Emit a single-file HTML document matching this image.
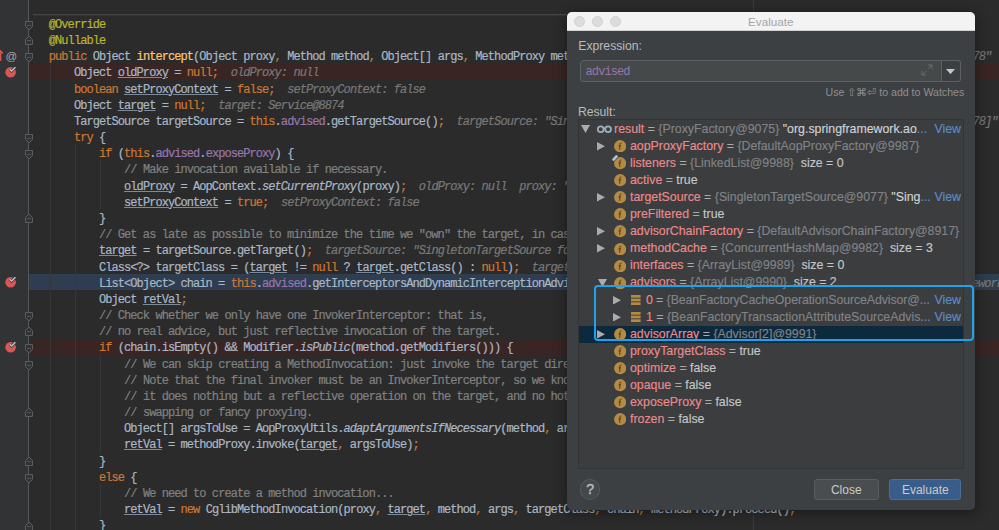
<!DOCTYPE html>
<html><head><meta charset="utf-8"><style>
*{margin:0;padding:0;box-sizing:border-box}
html,body{width:999px;height:530px;overflow:hidden;background:#2b2b2b}
body{position:relative;font-family:"Liberation Sans",sans-serif}
.gut{position:absolute;left:0;top:0;width:28.5px;height:530px;background:#313335}
.foldline{position:absolute;left:28px;top:0;width:1px;height:530px;background:#555759}
.sep{position:absolute;left:33px;top:14px;width:940px;height:2px;border-top:1px solid #454545;background:#353535}
.hl{position:absolute;left:29px;width:970px;height:16.18px}
.gd{position:absolute;width:1px;background:#373737}
.ln{position:absolute;left:48.8px;height:16.18px;line-height:16.18px;white-space:pre;font-family:"Liberation Mono",monospace;font-size:12px;letter-spacing:-0.93px;color:#a9b7c6;-webkit-text-stroke:0.2px currentColor}
.k{color:#cc7832}.a{color:#bbb529}.fn{color:#ffc66d}.f{color:#9876aa}.c{color:#808080}.i{font-style:italic}
.u{text-decoration:underline;text-decoration-color:#7d8a99;text-decoration-thickness:1px;text-underline-offset:1px}
.h{font-style:italic;color:#787878}
.fold{position:absolute;left:24.5px}
.bp{position:absolute;left:5px}
.rgt{position:absolute;left:48.8px}
.vguide{position:absolute;left:753px;top:0;width:1px;height:530px;background:#3b3b3b}

.ab{position:absolute}
.dlg{position:absolute;left:567px;top:11.5px;width:407.5px;height:498.2px;background:#3d4042;border-radius:5px;box-shadow:0 2px 14px rgba(0,0,0,0.45);overflow:hidden}
.tbar{position:absolute;left:0;top:0;width:100%;height:19.3px;background:#f3f3f3;border-bottom:1px solid #d2d2d2}
.tl{position:absolute;top:4.4px;width:11px;height:11px;border-radius:50%;background:#dcdcdc;border:0.5px solid #d0d0d0}
.ttl{position:absolute;left:0;width:100%;text-align:center;top:0;line-height:19px;font-size:11.7px;color:#a6a6a6;padding-left:0}
.lbl{position:absolute;font-size:12.2px;line-height:16px;color:#bbbbbb}
.inp{left:580.4px;top:60.4px;width:380.7px;height:21.5px;background:#45494a;border:1px solid #5d6062;border-radius:3px}
.drop{left:941px;top:60.4px;width:20.1px;height:21.5px;background:#3c3f41;border:1px solid #5d6062;border-radius:0 3px 3px 0}
.hint{left:825.5px;top:86px;font-size:10.6px;line-height:13px;color:#8d8f91;white-space:pre}
.panel{left:577.6px;top:118.6px;width:386.6px;height:350.4px;background:#3b3d3f;border:1px solid #323435}
.tr{position:absolute;height:17px;line-height:17px;font-size:12.35px;white-space:pre;overflow:hidden;-webkit-text-stroke:0.15px currentColor}
.nm{color:#ea8a8c}.eq{color:#a9abad}.ty{color:#808386}.val{color:#c4c6c8}.str{color:#d0d2d4}.lnk{color:#5b8cc8}
.bluebox{left:594.2px;top:284.9px;width:380.3px;height:56px;border:2.1px solid #1fa3ea;border-radius:4px}
.help{left:579.8px;top:479.2px;width:20.6px;height:20.5px;border-radius:50%;background:#45484a;border:1px solid #56595b;color:#b9bbbd;font-size:14px;text-align:center;line-height:19px;-webkit-text-stroke:0.4px currentColor}
.btn{top:479.3px;height:21px;border:1px solid;border-radius:3px;color:#c8cacc;font-size:12px;line-height:20.5px;text-align:center}
</style></head>
<body>

<div class="gut"></div>
<div class="vguide"></div>
<div class="sep"></div>
<div class="hl" style="top:63.64px;background:#3a2525"></div>
<div class="hl" style="top:338.70px;background:#3a2525"></div>
<div class="hl" style="top:273.98px;background:#2e3d50"></div>
<div class="gd" style="left:49.60px;top:63.64px;height:469.22px"></div>
<div class="gd" style="left:74.68px;top:144.54px;height:388.32px"></div>
<div class="gd" style="left:99.76px;top:160.72px;height:48.54px"></div>
<div class="gd" style="left:99.76px;top:354.88px;height:97.08px"></div>
<div class="gd" style="left:99.76px;top:484.32px;height:32.36px"></div>
<div class="ln" style="top:16.80px"><span class="a">@Override</span></div>
<div class="ln" style="top:32.98px"><span class="a">@Nullable</span></div>
<div class="ln" style="top:49.16px"><span class="k">public</span> Object <span class="fn">intercept</span>(Object proxy<span class="k">,</span> Method method<span class="k">,</span> Object[] args<span class="k">,</span> MethodProxy methodProxy) <span class="k">throws</span> Throwable {</div>
<div class="ln" style="top:65.34px">    Object <span class="u">oldProxy</span> = <span class="k">null;</span>  <span class="h">oldProxy: null</span></div>
<div class="ln" style="top:81.52px">    <span class="k">boolean</span> <span class="u">setProxyContext</span> = <span class="k">false;</span>  <span class="h">setProxyContext: false</span></div>
<div class="ln" style="top:97.70px">    Object <span class="u">target</span> = <span class="k">null;</span>  <span class="h">target: Service@8874</span></div>
<div class="ln" style="top:113.88px">    TargetSource targetSource = <span class="k">this</span>.<span class="f">advised</span>.getTargetSource()<span class="k">;</span>  <span class="h">targetSource: "SingletonTargetSource for target object [com.example.Servi</span></div>
<div class="ln" style="top:130.06px">    <span class="k">try</span> {</div>
<div class="ln" style="top:146.24px">        <span class="k">if</span> (<span class="k">this</span>.<span class="f">advised</span>.<span class="f">exposeProxy</span>) {</div>
<div class="ln" style="top:162.42px">            <span class="c">// Make invocation available if necessary.</span></div>
<div class="ln" style="top:178.60px">            <span class="u">oldProxy</span> = AopContext.<span class="i">setCurrentProxy</span>(proxy)<span class="k">;</span>  <span class="h">oldProxy: null  proxy: "com.example.Service@5d0a1b78"</span></div>
<div class="ln" style="top:194.78px">            <span class="u">setProxyContext</span> = <span class="k">true;</span>  <span class="h">setProxyContext: false</span></div>
<div class="ln" style="top:210.96px">        }</div>
<div class="ln" style="top:227.14px">        <span class="c">// Get as late as possible to minimize the time we "own" the target, in case the target comes from a pool.</span></div>
<div class="ln" style="top:243.32px">        <span class="u">target</span> = targetSource.getTarget()<span class="k">;</span>  <span class="h">targetSource: "SingletonTargetSource for target object [com.example]"</span></div>
<div class="ln" style="top:259.50px">        Class&lt;?&gt; targetClass = (<span class="u">target</span> != <span class="k">null</span> ? <span class="u">target</span>.getClass() : <span class="k">null</span>)<span class="k">;</span>  <span class="h">targetClass: "class com.example.Service"</span></div>
<div class="ln" style="top:275.68px">        List&lt;Object&gt; chain = <span class="k">this</span>.<span class="f">advised</span>.getInterceptorsAndDynamicInterceptionAdvice(method, targetClass)<span class="k">;</span>  <span class="h">chain: size = 1  method: "public</span></div>
<div class="ln" style="top:291.86px">        Object <span class="u">retVal</span><span class="k">;</span></div>
<div class="ln" style="top:308.04px">        <span class="c">// Check whether we only have one InvokerInterceptor: that is,</span></div>
<div class="ln" style="top:324.22px">        <span class="c">// no real advice, but just reflective invocation of the target.</span></div>
<div class="ln" style="top:340.40px">        <span class="k">if</span> (chain.isEmpty() &amp;&amp; Modifier.<span class="i">isPublic</span>(method.getModifiers())) {</div>
<div class="ln" style="top:356.58px">            <span class="c">// We can skip creating a MethodInvocation: just invoke the target directly.</span></div>
<div class="ln" style="top:372.76px">            <span class="c">// Note that the final invoker must be an InvokerInterceptor, so we know</span></div>
<div class="ln" style="top:388.94px">            <span class="c">// it does nothing but a reflective operation on the target, and no hot</span></div>
<div class="ln" style="top:405.12px">            <span class="c">// swapping or fancy proxying.</span></div>
<div class="ln" style="top:421.30px">            Object[] argsToUse = AopProxyUtils.<span class="i">adaptArgumentsIfNecessary</span>(method<span class="k">,</span> args)<span class="k">;</span></div>
<div class="ln" style="top:437.48px">            <span class="u">retVal</span> = methodProxy.invoke(<span class="u">target</span><span class="k">,</span> argsToUse)<span class="k">;</span></div>
<div class="ln" style="top:453.66px">        }</div>
<div class="ln" style="top:469.84px">        <span class="k">else</span> {</div>
<div class="ln" style="top:486.02px">            <span class="c">// We need to create a method invocation...</span></div>
<div class="ln" style="top:502.20px">            <span class="u">retVal</span> = <span class="k">new</span> CglibMethodInvocation(proxy<span class="k">,</span> <span class="u">target</span><span class="k">,</span> method<span class="k">,</span> args<span class="k">,</span> targetClass<span class="k">,</span> chain<span class="k">,</span> methodProxy).proceed()<span class="k">;</span></div>
<div class="ln" style="top:518.38px">        }</div>
<svg class="bp" style="top:65.73px" width="14" height="12" viewBox="0 0 14 12"><circle cx="5.6" cy="6.2" r="5.3" fill="#d95757"/><path d="M4.8,3.4 L6.6,5.0 L10.4,1.3" fill="none" stroke="#313335" stroke-width="2.8"/><path d="M4.8,3.4 L6.6,5.0 L10.4,1.3" fill="none" stroke="#bfc2c4" stroke-width="1.6"/></svg>
<svg class="bp" style="top:276.07px" width="14" height="12" viewBox="0 0 14 12"><circle cx="5.6" cy="6.2" r="5.3" fill="#d95757"/><path d="M4.8,3.4 L6.6,5.0 L10.4,1.3" fill="none" stroke="#313335" stroke-width="2.8"/><path d="M4.8,3.4 L6.6,5.0 L10.4,1.3" fill="none" stroke="#bfc2c4" stroke-width="1.6"/></svg>
<svg class="bp" style="top:340.79px" width="14" height="12" viewBox="0 0 14 12"><circle cx="5.6" cy="6.2" r="5.3" fill="#d95757"/><path d="M4.8,3.4 L6.6,5.0 L10.4,1.3" fill="none" stroke="#313335" stroke-width="2.8"/><path d="M4.8,3.4 L6.6,5.0 L10.4,1.3" fill="none" stroke="#bfc2c4" stroke-width="1.6"/></svg>
<div class="foldline"></div>
<svg class="fold" style="top:20.79px" width="8" height="9" viewBox="0 0 8 9"><path d="M0.5,0.5 H7.5 V5.5 L4,9 L0.5,5.5 Z" fill="#313335" stroke="#5a5c5e" stroke-width="1"/><path d="M2,4.5 H6" stroke="#535557" stroke-width="1"/></svg><svg class="fold" style="top:36.17px" width="8" height="9" viewBox="0 0 8 9"><path d="M0.5,8.5 H7.5 V3.5 L4,0 L0.5,3.5 Z" fill="#313335" stroke="#5a5c5e" stroke-width="1"/><path d="M2,4.5 H6" stroke="#535557" stroke-width="1"/></svg><svg class="fold" style="top:53.15px" width="8" height="9" viewBox="0 0 8 9"><path d="M0.5,0.5 H7.5 V5.5 L4,9 L0.5,5.5 Z" fill="#313335" stroke="#5a5c5e" stroke-width="1"/><path d="M2,4.5 H6" stroke="#535557" stroke-width="1"/></svg><svg class="fold" style="top:134.05px" width="8" height="9" viewBox="0 0 8 9"><path d="M0.5,0.5 H7.5 V5.5 L4,9 L0.5,5.5 Z" fill="#313335" stroke="#5a5c5e" stroke-width="1"/><path d="M2,4.5 H6" stroke="#535557" stroke-width="1"/></svg><svg class="fold" style="top:150.23px" width="8" height="9" viewBox="0 0 8 9"><path d="M0.5,0.5 H7.5 V5.5 L4,9 L0.5,5.5 Z" fill="#313335" stroke="#5a5c5e" stroke-width="1"/><path d="M2,4.5 H6" stroke="#535557" stroke-width="1"/></svg><svg class="fold" style="top:214.15px" width="8" height="9" viewBox="0 0 8 9"><path d="M0.5,8.5 H7.5 V3.5 L4,0 L0.5,3.5 Z" fill="#313335" stroke="#5a5c5e" stroke-width="1"/><path d="M2,4.5 H6" stroke="#535557" stroke-width="1"/></svg><svg class="fold" style="top:312.03px" width="8" height="9" viewBox="0 0 8 9"><path d="M0.5,0.5 H7.5 V5.5 L4,9 L0.5,5.5 Z" fill="#313335" stroke="#5a5c5e" stroke-width="1"/><path d="M2,4.5 H6" stroke="#535557" stroke-width="1"/></svg><svg class="fold" style="top:327.41px" width="8" height="9" viewBox="0 0 8 9"><path d="M0.5,8.5 H7.5 V3.5 L4,0 L0.5,3.5 Z" fill="#313335" stroke="#5a5c5e" stroke-width="1"/><path d="M2,4.5 H6" stroke="#535557" stroke-width="1"/></svg><svg class="fold" style="top:344.39px" width="8" height="9" viewBox="0 0 8 9"><path d="M0.5,0.5 H7.5 V5.5 L4,9 L0.5,5.5 Z" fill="#313335" stroke="#5a5c5e" stroke-width="1"/><path d="M2,4.5 H6" stroke="#535557" stroke-width="1"/></svg><svg class="fold" style="top:360.57px" width="8" height="9" viewBox="0 0 8 9"><path d="M0.5,0.5 H7.5 V5.5 L4,9 L0.5,5.5 Z" fill="#313335" stroke="#5a5c5e" stroke-width="1"/><path d="M2,4.5 H6" stroke="#535557" stroke-width="1"/></svg><svg class="fold" style="top:408.31px" width="8" height="9" viewBox="0 0 8 9"><path d="M0.5,8.5 H7.5 V3.5 L4,0 L0.5,3.5 Z" fill="#313335" stroke="#5a5c5e" stroke-width="1"/><path d="M2,4.5 H6" stroke="#535557" stroke-width="1"/></svg><svg class="fold" style="top:456.85px" width="8" height="9" viewBox="0 0 8 9"><path d="M0.5,8.5 H7.5 V3.5 L4,0 L0.5,3.5 Z" fill="#313335" stroke="#5a5c5e" stroke-width="1"/><path d="M2,4.5 H6" stroke="#535557" stroke-width="1"/></svg><svg class="fold" style="top:473.83px" width="8" height="9" viewBox="0 0 8 9"><path d="M0.5,0.5 H7.5 V5.5 L4,9 L0.5,5.5 Z" fill="#313335" stroke="#5a5c5e" stroke-width="1"/><path d="M2,4.5 H6" stroke="#535557" stroke-width="1"/></svg><svg class="fold" style="top:521.57px" width="8" height="9" viewBox="0 0 8 9"><path d="M0.5,8.5 H7.5 V3.5 L4,0 L0.5,3.5 Z" fill="#313335" stroke="#5a5c5e" stroke-width="1"/><path d="M2,4.5 H6" stroke="#535557" stroke-width="1"/></svg>

<div class="ln" style="left:966.2px;top:49.16px"><span class="h">a78"</span></div>
<div class="ln" style="left:966.2px;top:113.88px;background:#2b2b2b"><span class="h">a78]"</span></div>
<div class="ln" style="left:965.5px;top:275.68px"><span class="h">mework</span></div>

<div style="position:absolute;left:5.5px;top:49px;font-size:11.5px;color:#a9abad;font-family:'Liberation Sans',sans-serif;line-height:14px">@</div>
<svg style="position:absolute;left:0px;top:50px" width="5" height="12" viewBox="0 0 5 12"><path d="M0.5,11 V2.5" stroke="#d95757" stroke-width="1.6" fill="none"/><path d="M-1.8,3.8 L0.6,1 L2.6,3.6" stroke="#d95757" stroke-width="1.6" fill="none"/></svg>


<div class="dlg">
  <div class="tbar">
    <div class="tl" style="left:6.6px"></div><div class="tl" style="left:24.6px"></div><div class="tl" style="left:42.6px"></div>
    <div class="ttl">Evaluate</div>
  </div>
</div>
<div class="lbl" style="left:578.3px;top:38px">Expression:</div>
<div class="ab inp"></div>
<div class="ab drop"></div>
<div class="ab" style="left:585.6px;top:63.6px;height:16px;line-height:16px;font-family:'Liberation Mono',monospace;font-size:12px;letter-spacing:-0.93px;color:#9876aa;white-space:pre">advised</div>
<svg class="ab" style="left:921px;top:64px" width="12" height="12" viewBox="0 0 12 12"><path d="M7,1 H11 V5 M11,1 L7.2,4.8 M1,7 V11 H5 M1,11 L4.8,7.2" fill="none" stroke="#6b6e70" stroke-width="1"/></svg>
<svg class="ab" style="left:946.3px;top:68.7px" width="9" height="5.2" viewBox="0 0 9 5.2"><path d="M0,0 H9 L4.5,5.2 Z" fill="#c4c6c8"/></svg>
<div class="ab hint">Use ⇧⌘⏎ to add to Watches</div>
<div class="lbl" style="left:577.9px;top:104.2px">Result:</div>
<div class="ab panel"></div>
<div class="ab" style="left:578.5px;top:325.76px;width:384.5px;height:16.8px;background:#0d293e"></div><svg class="ab" style="left:581.10px;top:125.20px" width="9" height="8" viewBox="0 0 9 8"><path d="M0,0 H9 L4.5,8 Z" fill="#a9abad"/></svg><svg class="ab" style="left:596.5px;top:125.20px" width="15" height="8" viewBox="0 0 15 8"><circle cx="3.7" cy="4.2" r="2.9" fill="none" stroke="#9fb2c2" stroke-width="1.7"/><circle cx="11.1" cy="4.2" r="2.9" fill="none" stroke="#9fb2c2" stroke-width="1.7"/><path d="M6.4,3.2 H8.4" stroke="#9fb2c2" stroke-width="1.5"/></svg><div class="tr" style="left:614.1px;top:120.70px;width:319.9px"><span class="nm">result</span><span class="eq"> = </span><span class="ty">{ProxyFactory@9075} </span><span class="str">"org.springframework.ao</span><span class="lnk">...</span></div><div class="tr" style="left:934.4px;top:120.70px"><span class="lnk">View</span></div><svg class="ab" style="left:597.00px;top:141.98px" width="8" height="8.6" viewBox="0 0 8 8.6"><path d="M0,0 L8,4.3 L0,8.6 Z" fill="#a9abad"/></svg><svg class="ab" style="left:613.70px;top:140.08px" width="12.4" height="12.4" viewBox="0 0 12.4 12.4"><circle cx="6.2" cy="6.2" r="6.1" fill="#b48b44"/><path d="M7.5,3.0 C6.6,2.7 6.0,3.2 5.9,4.3 L5.7,9.8 M4.6,5.9 H7.0" fill="none" stroke="#4a3a1c" stroke-width="0.95"/></svg><div class="tr" style="left:630.0px;top:137.78px;width:333.0px"><span class="nm">aopProxyFactory</span><span class="eq"> = </span><span class="ty">{DefaultAopProxyFactory@9987}</span></div><svg class="ab" style="left:613.70px;top:157.16px" width="12.4" height="12.4" viewBox="0 0 12.4 12.4"><circle cx="6.2" cy="6.2" r="6.1" fill="#b48b44"/><path d="M7.5,3.0 C6.6,2.7 6.0,3.2 5.9,4.3 L5.7,9.8 M4.6,5.9 H7.0" fill="none" stroke="#4a3a1c" stroke-width="0.95"/></svg><div class="tr" style="left:630.0px;top:154.86px;width:333.0px"><span class="nm">listeners</span><span class="eq"> = </span><span class="ty">{LinkedList@9988} </span><span class="val"> size = 0</span></div><svg class="ab" style="left:613.70px;top:174.24px" width="12.4" height="12.4" viewBox="0 0 12.4 12.4"><circle cx="6.2" cy="6.2" r="6.1" fill="#b48b44"/><path d="M7.5,3.0 C6.6,2.7 6.0,3.2 5.9,4.3 L5.7,9.8 M4.6,5.9 H7.0" fill="none" stroke="#4a3a1c" stroke-width="0.95"/></svg><div class="tr" style="left:630.0px;top:171.94px;width:333.0px"><span class="nm">active</span><span class="eq"> = </span><span class="val">true</span></div><svg class="ab" style="left:597.00px;top:193.22px" width="8" height="8.6" viewBox="0 0 8 8.6"><path d="M0,0 L8,4.3 L0,8.6 Z" fill="#a9abad"/></svg><svg class="ab" style="left:613.70px;top:191.32px" width="12.4" height="12.4" viewBox="0 0 12.4 12.4"><circle cx="6.2" cy="6.2" r="6.1" fill="#b48b44"/><path d="M7.5,3.0 C6.6,2.7 6.0,3.2 5.9,4.3 L5.7,9.8 M4.6,5.9 H7.0" fill="none" stroke="#4a3a1c" stroke-width="0.95"/></svg><div class="tr" style="left:630.0px;top:189.02px;width:304.0px"><span class="nm">targetSource</span><span class="eq"> = </span><span class="ty">{SingletonTargetSource@9077} </span><span class="str">"Sing</span><span class="lnk">...</span></div><div class="tr" style="left:934.4px;top:189.02px"><span class="lnk">View</span></div><svg class="ab" style="left:613.70px;top:208.40px" width="12.4" height="12.4" viewBox="0 0 12.4 12.4"><circle cx="6.2" cy="6.2" r="6.1" fill="#b48b44"/><path d="M7.5,3.0 C6.6,2.7 6.0,3.2 5.9,4.3 L5.7,9.8 M4.6,5.9 H7.0" fill="none" stroke="#4a3a1c" stroke-width="0.95"/></svg><div class="tr" style="left:630.0px;top:206.10px;width:333.0px"><span class="nm">preFiltered</span><span class="eq"> = </span><span class="val">true</span></div><svg class="ab" style="left:597.00px;top:227.38px" width="8" height="8.6" viewBox="0 0 8 8.6"><path d="M0,0 L8,4.3 L0,8.6 Z" fill="#a9abad"/></svg><svg class="ab" style="left:613.70px;top:225.48px" width="12.4" height="12.4" viewBox="0 0 12.4 12.4"><circle cx="6.2" cy="6.2" r="6.1" fill="#b48b44"/><path d="M7.5,3.0 C6.6,2.7 6.0,3.2 5.9,4.3 L5.7,9.8 M4.6,5.9 H7.0" fill="none" stroke="#4a3a1c" stroke-width="0.95"/></svg><div class="tr" style="left:630.0px;top:223.18px;width:333.0px"><span class="nm">advisorChainFactory</span><span class="eq"> = </span><span class="ty">{DefaultAdvisorChainFactory@8917}</span></div><svg class="ab" style="left:597.00px;top:244.46px" width="8" height="8.6" viewBox="0 0 8 8.6"><path d="M0,0 L8,4.3 L0,8.6 Z" fill="#a9abad"/></svg><svg class="ab" style="left:613.70px;top:242.56px" width="12.4" height="12.4" viewBox="0 0 12.4 12.4"><circle cx="6.2" cy="6.2" r="6.1" fill="#b48b44"/><path d="M7.5,3.0 C6.6,2.7 6.0,3.2 5.9,4.3 L5.7,9.8 M4.6,5.9 H7.0" fill="none" stroke="#4a3a1c" stroke-width="0.95"/></svg><div class="tr" style="left:630.0px;top:240.26px;width:333.0px"><span class="nm">methodCache</span><span class="eq"> = </span><span class="ty">{ConcurrentHashMap@9982} </span><span class="val"> size = 3</span></div><svg class="ab" style="left:613.70px;top:259.64px" width="12.4" height="12.4" viewBox="0 0 12.4 12.4"><circle cx="6.2" cy="6.2" r="6.1" fill="#b48b44"/><path d="M7.5,3.0 C6.6,2.7 6.0,3.2 5.9,4.3 L5.7,9.8 M4.6,5.9 H7.0" fill="none" stroke="#4a3a1c" stroke-width="0.95"/></svg><div class="tr" style="left:630.0px;top:257.34px;width:333.0px"><span class="nm">interfaces</span><span class="eq"> = </span><span class="ty">{ArrayList@9989} </span><span class="val"> size = 0</span></div><svg class="ab" style="left:597.70px;top:278.92px" width="9" height="8" viewBox="0 0 9 8"><path d="M0,0 H9 L4.5,8 Z" fill="#a9abad"/></svg><svg class="ab" style="left:613.70px;top:276.72px" width="12.4" height="12.4" viewBox="0 0 12.4 12.4"><circle cx="6.2" cy="6.2" r="6.1" fill="#b48b44"/><path d="M7.5,3.0 C6.6,2.7 6.0,3.2 5.9,4.3 L5.7,9.8 M4.6,5.9 H7.0" fill="none" stroke="#4a3a1c" stroke-width="0.95"/></svg><div class="tr" style="left:630.0px;top:274.42px;width:333.0px"><span class="nm">advisors</span><span class="eq"> = </span><span class="ty">{ArrayList@9990} </span><span class="val"> size = 2</span></div><svg class="ab" style="left:613.20px;top:295.70px" width="8" height="8.6" viewBox="0 0 8 8.6"><path d="M0,0 L8,4.3 L0,8.6 Z" fill="#a9abad"/></svg><svg class="ab" style="left:631.0px;top:295.00px" width="10" height="10" viewBox="0 0 10 10"><rect x="0" y="0" width="9.6" height="2.7" fill="#b48b44"/><rect x="0" y="3.65" width="9.6" height="2.7" fill="#b48b44"/><rect x="0" y="7.3" width="9.6" height="2.7" fill="#b48b44"/></svg><div class="tr" style="left:646.0px;top:291.50px;width:288.0px;letter-spacing:-0.09px"><span class="nm">0</span><span class="eq"> = </span><span class="ty">{BeanFactoryCacheOperationSourceAdvisor@</span><span class="lnk">...</span></div><div class="tr" style="left:934.4px;top:291.50px"><span class="lnk">View</span></div><svg class="ab" style="left:613.20px;top:312.78px" width="8" height="8.6" viewBox="0 0 8 8.6"><path d="M0,0 L8,4.3 L0,8.6 Z" fill="#a9abad"/></svg><svg class="ab" style="left:631.0px;top:312.08px" width="10" height="10" viewBox="0 0 10 10"><rect x="0" y="0" width="9.6" height="2.7" fill="#b48b44"/><rect x="0" y="3.65" width="9.6" height="2.7" fill="#b48b44"/><rect x="0" y="7.3" width="9.6" height="2.7" fill="#b48b44"/></svg><div class="tr" style="left:646.0px;top:308.58px;width:288.0px"><span class="nm">1</span><span class="eq"> = </span><span class="ty">{BeanFactoryTransactionAttributeSourceAdvis</span><span class="lnk">...</span></div><div class="tr" style="left:934.4px;top:308.58px"><span class="lnk">View</span></div><svg class="ab" style="left:597.20px;top:329.86px" width="8" height="8.6" viewBox="0 0 8 8.6"><path d="M0,0 L8,4.3 L0,8.6 Z" fill="#a9abad"/></svg><svg class="ab" style="left:613.70px;top:327.96px" width="12.4" height="12.4" viewBox="0 0 12.4 12.4"><circle cx="6.2" cy="6.2" r="6.1" fill="#b48b44"/><path d="M7.5,3.0 C6.6,2.7 6.0,3.2 5.9,4.3 L5.7,9.8 M4.6,5.9 H7.0" fill="none" stroke="#4a3a1c" stroke-width="0.95"/></svg><div class="tr" style="left:630.0px;top:325.66px;width:333.0px"><span class="nm">advisorArray</span><span class="eq"> = </span><span class="ty">{Advisor[2]@9991}</span></div><svg class="ab" style="left:613.70px;top:345.04px" width="12.4" height="12.4" viewBox="0 0 12.4 12.4"><circle cx="6.2" cy="6.2" r="6.1" fill="#b48b44"/><path d="M7.5,3.0 C6.6,2.7 6.0,3.2 5.9,4.3 L5.7,9.8 M4.6,5.9 H7.0" fill="none" stroke="#4a3a1c" stroke-width="0.95"/></svg><div class="tr" style="left:630.0px;top:342.74px;width:333.0px"><span class="nm">proxyTargetClass</span><span class="eq"> = </span><span class="val">true</span></div><svg class="ab" style="left:613.70px;top:362.12px" width="12.4" height="12.4" viewBox="0 0 12.4 12.4"><circle cx="6.2" cy="6.2" r="6.1" fill="#b48b44"/><path d="M7.5,3.0 C6.6,2.7 6.0,3.2 5.9,4.3 L5.7,9.8 M4.6,5.9 H7.0" fill="none" stroke="#4a3a1c" stroke-width="0.95"/></svg><div class="tr" style="left:630.0px;top:359.82px;width:333.0px"><span class="nm">optimize</span><span class="eq"> = </span><span class="val">false</span></div><svg class="ab" style="left:613.70px;top:379.20px" width="12.4" height="12.4" viewBox="0 0 12.4 12.4"><circle cx="6.2" cy="6.2" r="6.1" fill="#b48b44"/><path d="M7.5,3.0 C6.6,2.7 6.0,3.2 5.9,4.3 L5.7,9.8 M4.6,5.9 H7.0" fill="none" stroke="#4a3a1c" stroke-width="0.95"/></svg><div class="tr" style="left:630.0px;top:376.90px;width:333.0px"><span class="nm">opaque</span><span class="eq"> = </span><span class="val">false</span></div><svg class="ab" style="left:613.70px;top:396.28px" width="12.4" height="12.4" viewBox="0 0 12.4 12.4"><circle cx="6.2" cy="6.2" r="6.1" fill="#b48b44"/><path d="M7.5,3.0 C6.6,2.7 6.0,3.2 5.9,4.3 L5.7,9.8 M4.6,5.9 H7.0" fill="none" stroke="#4a3a1c" stroke-width="0.95"/></svg><div class="tr" style="left:630.0px;top:393.98px;width:333.0px"><span class="nm">exposeProxy</span><span class="eq"> = </span><span class="val">false</span></div><svg class="ab" style="left:613.70px;top:413.36px" width="12.4" height="12.4" viewBox="0 0 12.4 12.4"><circle cx="6.2" cy="6.2" r="6.1" fill="#b48b44"/><path d="M7.5,3.0 C6.6,2.7 6.0,3.2 5.9,4.3 L5.7,9.8 M4.6,5.9 H7.0" fill="none" stroke="#4a3a1c" stroke-width="0.95"/></svg><div class="tr" style="left:630.0px;top:411.06px;width:333.0px"><span class="nm">frozen</span><span class="eq"> = </span><span class="val">false</span></div><svg class="ab" style="left:612px;top:155.36px" width="6" height="6" viewBox="0 0 6 6"><path d="M1.5,4.5 L4.5,1.5" stroke="#3a3c3e" stroke-width="4" stroke-linecap="round"/><path d="M1.6,4.4 L4.4,1.6" stroke="#b3c0ca" stroke-width="2.8" stroke-linecap="round"/></svg>
<div class="ab bluebox"></div>
<div class="ab help">?</div>
<div class="ab btn" style="left:813.8px;width:65px;background:#4a4d4f;border-color:#5a5d5f">Close</div>
<div class="ab btn" style="left:889.4px;width:71.8px;background:#395d8a;border-color:#4b6e99">Evaluate</div>


</body></html>
